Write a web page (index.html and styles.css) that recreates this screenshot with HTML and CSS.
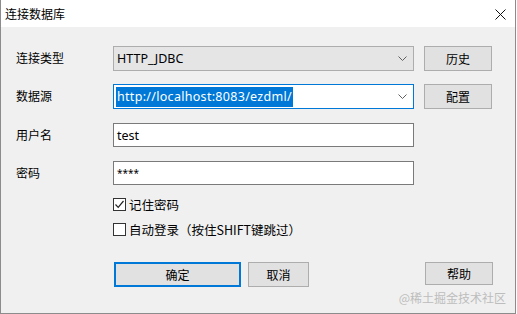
FILE: index.html
```html
<!DOCTYPE html>
<html lang="zh-CN">
  <head>
    <meta charset="UTF-8" />
    <title>连接数据库</title>
    <link rel="stylesheet" href="styles.css">
  </head>
  <body>
    <div class="win">
      <div class="title">
        <span>连接数据库</span>
        <svg class="close" width="11" height="11" viewBox="0 0 11 11">
          <path d="M0.5 0.5 L10.5 10.5 M10.5 0.5 L0.5 10.5" stroke="#111" stroke-width="1" fill="none" />
        </svg>
      </div>
      <div class="body">
        <div class="row r1">
          <div class="lbl">连接类型</div>
          <div class="combo gray">
            <span class="val">HTTP_JDBC</span>
            <svg class="chev" width="9" height="5" viewBox="0 0 9 5"><path d="M0.5 0.5 L4.5 4.5 L8.5 0.5" stroke="#606060" fill="none" /></svg>
          </div>
          <div class="btn side">历史</div>
        </div>
        <div class="row r2">
          <div class="lbl">数据源</div>
          <div class="combo focus">
            <span class="val"><span class="sel">http://localhost:8083/ezdml/</span></span>
            <svg class="chev" width="9" height="5" viewBox="0 0 9 5"><path d="M0.5 0.5 L4.5 4.5 L8.5 0.5" stroke="#606060" fill="none" /></svg>
          </div>
          <div class="btn side">配置</div>
        </div>
        <div class="row r3">
          <div class="lbl">用户名</div>
          <div class="edit">test</div>
        </div>
        <div class="row r4">
          <div class="lbl">密码</div>
          <div class="edit pw">****</div>
        </div>
        <div class="check c1">
          <span class="box">
            <svg width="11" height="11" viewBox="0 0 11 11"><path d="M1.5 5.5 L4.2 8.3 L9.5 2" stroke="#222" stroke-width="1.2" fill="none" /></svg>
          </span>
          <span>记住密码</span>
        </div>
        <div class="check c2">
          <span class="box"></span>
          <span>自动登录（按住SHIFT键跳过）</span>
        </div>
        <div class="buttons">
          <div class="btn ok">确定</div>
          <div class="btn cancel">取消</div>
          <div class="spacer"></div>
          <div class="btn side">帮助</div>
        </div>
      </div>
      <div class="mark">@稀土掘金技术社区</div>
    </div>
  </body>
</html>
```
FILE: styles.css
```css
* {
  box-sizing: border-box;
}
body {
  margin: 0;
  font-family: "Noto Sans", "Noto Sans CJK SC", sans-serif;
  font-size: 12px;
  color: #000;
}
.win {
  position: relative;
  width: 516px;
  height: 314px;
  background: #f0f0f0;
  border-left: 1px solid #8c8c8c;
  border-right: 1px solid #8c8c8c;
  border-bottom: 1px solid #8c8c8c;
}
.title {
  height: 27px;
  background: #fff;
  display: flex;
  align-items: center;
  padding-left: 4px;
  padding-right: 9px;
  font-family: "Noto Sans CJK SC", sans-serif;
  font-size: 12px;
}
.title span {
  flex: 1;
}
.close {
  margin-top: 1px;
}
.body {
  padding: 19px 0 0 15px;
  display: flex;
  flex-direction: column;
}
.row {
  display: flex;
  align-items: center;
  height: 25px;
}
.r2 { margin-top: 13px; }
.r3 { margin-top: 14px; height: 24px; }
.r4 { margin-top: 14px; height: 24px; }
.lbl {
  width: 97px;
  font-family: "Noto Sans CJK SC", sans-serif;
  margin-top: -2px;
}
.combo {
  width: 301px;
  height: 25px;
  display: flex;
  align-items: center;
  padding: 0 5px 0 3px;
  border: 1px solid #adadad;
}
.combo.gray {
  background: #e5e5e5;
}
.combo.focus {
  background: #fff;
  border-color: #0078d7;
  padding-left: 2px;
}
.val {
  flex: 1;
  font-size: 12.5px;
  white-space: nowrap;
}
.sel {
  background: #0078d7;
  color: #fff;
  padding: 1px 1px 2px 1px;
  letter-spacing: 0.3px;
}
.chev {
  margin-right: 1px;
}
.btn {
  height: 25px;
  background: #e1e1e1;
  border: 1px solid #adadad;
  display: flex;
  align-items: center;
  justify-content: center;
  font-family: "Noto Sans CJK SC", sans-serif;
}
.side {
  width: 68px;
  margin-left: 10px;
}
.edit {
  width: 301px;
  height: 24px;
  background: #fff;
  border: 1px solid #7a7a7a;
  padding-left: 3px;
  display: flex;
  align-items: center;
  font-size: 12.5px;
}
.edit.pw {
  font-size: 10px;
  align-items: flex-start;
  padding-top: 4px;
}
.check {
  display: flex;
  align-items: center;
  height: 13px;
  margin-left: 97px;
  font-family: "Noto Sans CJK SC", sans-serif;
  font-size: 12.5px;
}
.c1 { margin-top: 13px; }
.c2 { margin-top: 12px; }
.box {
  width: 13px;
  height: 13px;
  border: 1px solid #333;
  background: #fff;
  margin-right: 3px;
  display: flex;
  align-items: center;
  justify-content: center;
}
.buttons {
  display: flex;
  margin-top: 26px;
  margin-left: 98px;
  width: 379px;
}
.ok {
  width: 127px;
  border: 2px solid #0078d7;
}
.cancel {
  width: 61px;
  margin-left: 7px;
}
.spacer {
  flex: 1;
}
.buttons .side {
  height: 23px;
}
.mark {
  position: absolute;
  right: 9px;
  bottom: 7px;
  color: #bdbdbd;
  font-family: "Noto Sans CJK SC", sans-serif;
  font-size: 12px;
}
```
